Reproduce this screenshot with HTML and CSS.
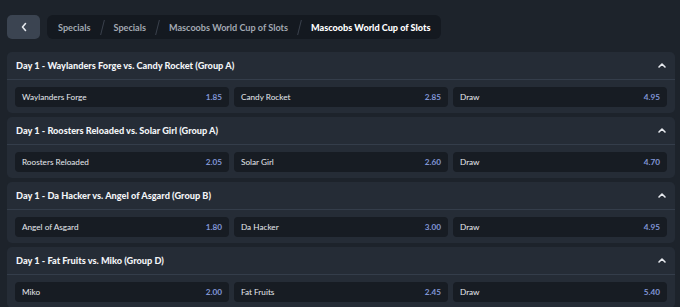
FILE: index.html
```html
<!DOCTYPE html>
<html lang="en">
<head>
    <meta charset="UTF-8">
    <meta name="viewport" content="width=device-width, initial-scale=1.0">
    <title>Mascoobs World Cup of Slots</title>
    <link rel="stylesheet" href="styles.css">
</head>
<body>
    <nav class="topbar">
        <button class="back-btn" aria-label="Back">
            <svg width="8" height="10" viewBox="0 0 8 10"><path d="M5.5 1.5 L2.5 5 L5.5 8.5" fill="none" stroke="#e6e9ee" stroke-width="1.6" stroke-linecap="round" stroke-linejoin="round"/></svg>
        </button>
        <div class="crumbs">
            <a class="crumb" href="#">Specials</a>
            <span class="sep"></span>
            <a class="crumb" href="#">Specials</a>
            <span class="sep"></span>
            <a class="crumb" href="#">Mascoobs World Cup of Slots</a>
            <span class="sep"></span>
            <span class="crumb active">Mascoobs World Cup of Slots</span>
        </div>
    </nav>

    <main class="markets">
        <section class="market">
            <header class="market-head">
                <h2>Day 1 - Waylanders Forge vs. Candy Rocket (Group A)</h2>
                <svg class="chev" width="10" height="7" viewBox="0 0 10 7"><path d="M2 5 L5 2 L8 5" fill="none" stroke="#e6e9ee" stroke-width="1.6" stroke-linecap="round" stroke-linejoin="round"/></svg>
            </header>
            <div class="outcomes">
                <button class="outcome"><span>Waylanders Forge</span><b>1.85</b></button>
                <button class="outcome"><span>Candy Rocket</span><b>2.85</b></button>
                <button class="outcome"><span>Draw</span><b>4.95</b></button>
            </div>
        </section>

        <section class="market">
            <header class="market-head">
                <h2>Day 1 - Roosters Reloaded vs. Solar Girl (Group A)</h2>
                <svg class="chev" width="10" height="7" viewBox="0 0 10 7"><path d="M2 5 L5 2 L8 5" fill="none" stroke="#e6e9ee" stroke-width="1.6" stroke-linecap="round" stroke-linejoin="round"/></svg>
            </header>
            <div class="outcomes">
                <button class="outcome"><span>Roosters Reloaded</span><b>2.05</b></button>
                <button class="outcome"><span>Solar Girl</span><b>2.60</b></button>
                <button class="outcome"><span>Draw</span><b>4.70</b></button>
            </div>
        </section>

        <section class="market">
            <header class="market-head">
                <h2>Day 1 - Da Hacker vs. Angel of Asgard (Group B)</h2>
                <svg class="chev" width="10" height="7" viewBox="0 0 10 7"><path d="M2 5 L5 2 L8 5" fill="none" stroke="#e6e9ee" stroke-width="1.6" stroke-linecap="round" stroke-linejoin="round"/></svg>
            </header>
            <div class="outcomes">
                <button class="outcome"><span>Angel of Asgard</span><b>1.80</b></button>
                <button class="outcome"><span>Da Hacker</span><b>3.00</b></button>
                <button class="outcome"><span>Draw</span><b>4.95</b></button>
            </div>
        </section>

        <section class="market">
            <header class="market-head">
                <h2>Day 1 - Fat Fruits vs. Miko (Group D)</h2>
                <svg class="chev" width="10" height="7" viewBox="0 0 10 7"><path d="M2 5 L5 2 L8 5" fill="none" stroke="#e6e9ee" stroke-width="1.6" stroke-linecap="round" stroke-linejoin="round"/></svg>
            </header>
            <div class="outcomes">
                <button class="outcome"><span>Miko</span><b>2.00</b></button>
                <button class="outcome"><span>Fat Fruits</span><b>2.45</b></button>
                <button class="outcome"><span>Draw</span><b>5.40</b></button>
            </div>
        </section>
    </main>
</body>
</html>
```

FILE: styles.css
```css
* {
    box-sizing: border-box;
}
body {
    margin: 0;
    padding: 15px 5px 0 7px;
    background-color: #1d232b;
    color: #e6e9ee;
    font-family: Lato, "Noto Sans", Arial, sans-serif;
    font-size: 10px;
    overflow: hidden;
}
.topbar {
    display: flex;
    gap: 7px;
    height: 24px;
    margin-bottom: 13px;
}
.back-btn {
    width: 33px;
    height: 24px;
    border: none;
    border-radius: 5px;
    background-color: #3b4451;
    display: flex;
    align-items: center;
    justify-content: center;
    padding: 0;
}
.crumbs {
    display: flex;
    align-items: center;
    background-color: #141920;
    border-radius: 6px;
    padding: 0 11px;
    gap: 11px;
}
.crumb {
    color: #a3a9b3;
    text-decoration: none;
    font-weight: 700;
    font-size: 9.1px;
}
.crumb.active {
    color: #ffffff;
    font-weight: 900;
}
.sep {
    width: 1px;
    height: 15px;
    background-color: #3a414c;
    transform: skewX(-14deg);
}
.markets {
    display: flex;
    flex-direction: column;
    gap: 4px;
    width: 668px;
}
.market {
    background-color: #252c36;
    border-radius: 5px;
    padding-bottom: 6px;
}
.market-head {
    height: 28px;
    display: flex;
    align-items: center;
    justify-content: space-between;
    padding: 0 8px 0 9px;
    border-bottom: 1px solid #343d4a;
}
.market-head h2 {
    margin: 0;
    font-size: 9.2px;
    font-weight: 900;
    color: #f2f4f7;
}
.outcomes {
    display: grid;
    grid-template-columns: repeat(3, 1fr);
    gap: 5px;
    padding: 7px 8px 0;
}
.outcome {
    height: 20px;
    border: none;
    border-radius: 4px;
    background-color: #171c23;
    display: flex;
    align-items: center;
    justify-content: space-between;
    padding: 0 7px;
    font-family: inherit;
    font-size: 8.2px;
    color: #e6e9ee;
}
.outcome b {
    color: #8196d6;
    font-weight: 700;
}
```
